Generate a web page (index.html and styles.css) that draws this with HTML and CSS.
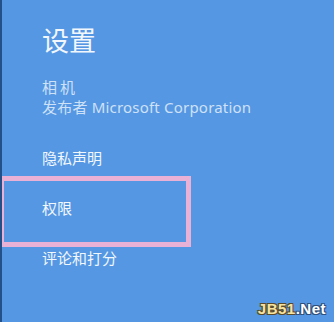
FILE: index.html
```html
<!DOCTYPE html>
<html>
<head>
  <meta charset="utf-8">
  <link rel="stylesheet" href="styles.css">
</head>
<body>
  <div class="pane">
    <h1 class="title">设置</h1>

    <div class="app-info">
      <div class="app-name">相机</div>
      <div class="publisher">发布者 Microsoft Corporation</div>
    </div>

    <ul class="menu">
      <li class="menu-item">隐私声明</li>
      <li class="menu-item selected">权限</li>
      <li class="menu-item">评论和打分</li>
    </ul>
  </div>

  <div class="watermark"><span class="wm-jb">JB51</span><span class="wm-net">.Net</span></div>
</body>
</html>
```

FILE: styles.css
```css
* {
  margin: 0;
  padding: 0;
  box-sizing: border-box;
}

html, body {
  height: 100%;
}

body {
  background: #5597e2;
  border-left: 2px solid #24508a;
  font-family: 'Noto Sans', 'Noto Sans CJK SC', sans-serif;
  color: #f2f7fd;
  overflow: hidden;
  position: relative;
}

.pane {
  padding: 25px 0 0 40px;
}

.title {
  font-size: 27px;
  font-weight: 400;
  line-height: 32px;
}

.app-info {
  margin-top: 20px;
  color: #cfe1f7;
  font-size: 15px;
  line-height: 20px;
}

.app-name {
  letter-spacing: 3px;
}

.publisher {
  letter-spacing: 0.2px;
}

.menu {
  list-style: none;
  margin-top: 16px;
}

.menu-item {
  font-size: 15px;
  line-height: 50px;
  height: 50px;
  position: relative;
}

/* highlight marker drawn over the row */
.menu-item.selected::before {
  content: '';
  position: absolute;
  top: -7px;
  left: -40px;
  width: 182px;
  height: 61px;
  border: 5px solid #e9b1d6;
  border-left-width: 2px;
}

.watermark {
  position: absolute;
  right: 8px;
  bottom: 5px;
  font-family: 'Liberation Sans', sans-serif;
  font-weight: 700;
  font-size: 15px;
  letter-spacing: 0.5px;
}

.wm-jb {
  color: #f6e3a0;
  text-shadow: -1px -1px 0 #5a4a2a, 1px -1px 0 #5a4a2a, -1px 1px 0 #5a4a2a, 1px 1px 0 #5a4a2a;
}

.wm-net {
  color: #ffffff;
  text-shadow: -1px -1px 0 #2f4f7a, 1px -1px 0 #2f4f7a, -1px 1px 0 #2f4f7a, 1px 1px 0 #2f4f7a;
}
```
